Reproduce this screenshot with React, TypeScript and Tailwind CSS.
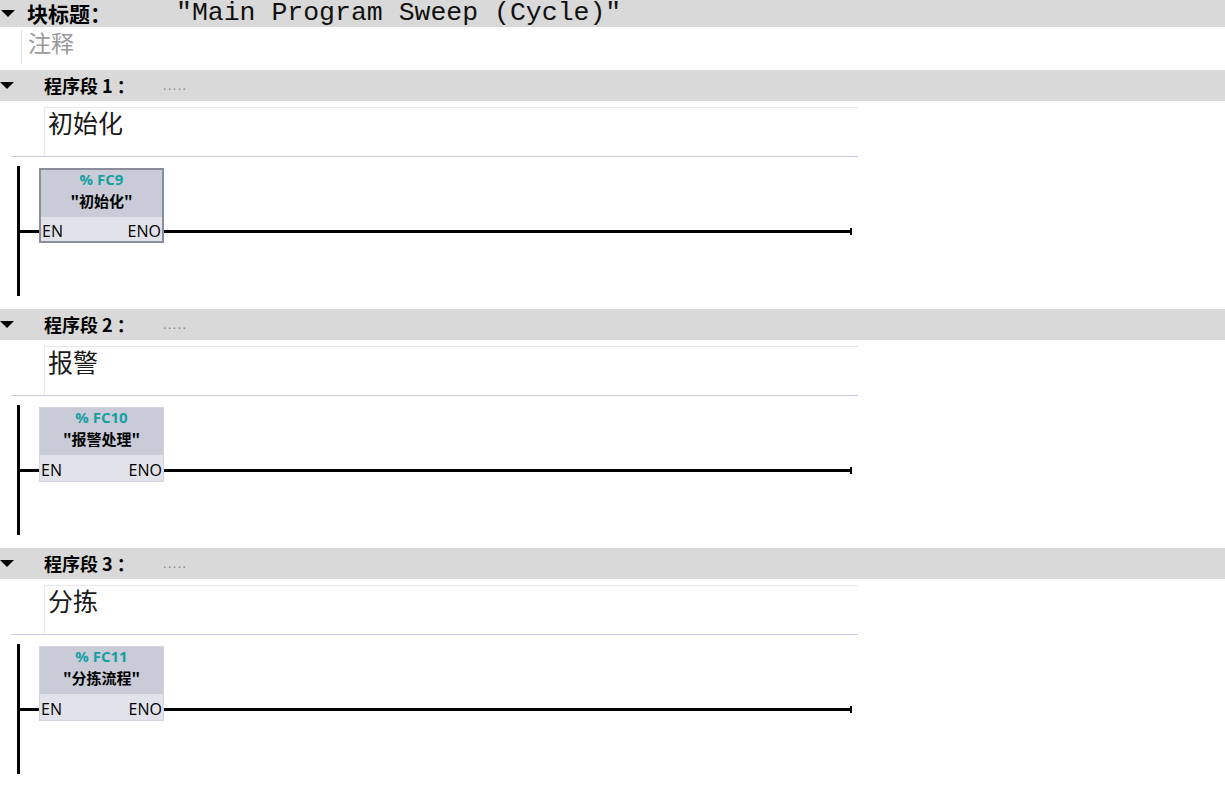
import React from 'react'

const cjk = "font-['Noto_Sans_CJK_SC',sans-serif]"

const networks = [
  { no: 1, comment: '初始化', addr: '%FC9', name: '"初始化"', selected: true },
  { no: 2, comment: '报警', addr: '%FC10', name: '"报警处理"', selected: false },
  { no: 3, comment: '分拣', addr: '%FC11', name: '"分拣流程"', selected: false },
]

const Caret = () => (
  <svg width="14" height="8" viewBox="0 0 14 8" className="shrink-0">
    <path d="M0 0 L14 0 L7 7 Z" fill="#000" />
  </svg>
)

const Block = ({ addr, name, selected }: { addr: string; name: string; selected: boolean }) => (
  <div
    className={`mt-[2px] flex h-[75px] w-[125px] shrink-0 flex-col ${
      selected ? 'border-2 border-[#8a8e9c]' : 'border border-[#d3d4de]'
    }`}
  >
    <div className="flex h-[47px] flex-col items-center bg-[#c9cbd8]">
      <span className="font-['Open_Sans',sans-serif] text-[15px] leading-[18px] font-bold text-[#15a0a0]">
        {addr.replace('%', '% ')}
      </span>
      <span className={`${cjk} text-[15px] leading-[26px] font-bold text-black`}>{name}</span>
    </div>
    <div className="flex flex-1 items-center justify-between bg-[#e1e2ea] pt-[3px] pr-[1px] pl-[1px] font-['Open_Sans',sans-serif] text-[16px] leading-none text-black">
      <span>EN</span>
      <span>ENO</span>
    </div>
  </div>
)

const Network = ({ n }: { n: (typeof networks)[number] }) => (
  <div className="flex flex-col">
    <div className="flex h-[31px] items-center bg-[#d9d9d9]">
      <Caret />
      <span className={`${cjk} ml-[30px] text-[18px] leading-[31px] font-bold text-black`}>
        程序段 {n.no} ：
      </span>
      <span className="ml-[28px] font-['Liberation_Sans',sans-serif] text-[14px] tracking-[1px] text-[#8a8a8a]">
        .....
      </span>
    </div>
    <div className="mt-[6px] ml-[44px] flex h-[49px] w-[814px] items-start border-t border-l border-[#e8e8e8] pl-[3px]">
      <span className={`${cjk} text-[25px] leading-[28px] text-[#1a1a1a]`}>{n.comment}</span>
    </div>
    <div className="ml-[11px] h-px w-[847px] bg-[#cac9e6]" />
    <div className="mt-[9px] flex h-[130px] pl-[17px]">
      <div className="h-full w-[3px] bg-black" />
      <div className="mt-[64px] h-[3px] w-[19px] bg-black" />
      <Block addr={n.addr} name={n.name} selected={n.selected} />
      <div className="mt-[64px] h-[3px] w-[686px] bg-black" />
      <div className="mt-[62px] h-[7px] w-[2px] bg-black" />
    </div>
    <div className="h-[13px]" />
  </div>
)

export default function App() {
  return (
    <div className="flex min-h-screen w-full flex-col bg-white">
      <div className="flex h-[27px] items-center bg-[#d9d9d9]">
        <div className="ml-[1px]">
          <Caret />
        </div>
        <span className={`${cjk} ml-[12px] text-[21px] leading-[27px] font-bold text-black`}>块标题：</span>
        <span className="ml-[65px] font-['Liberation_Mono',monospace] text-[26.5px] leading-[27px] text-[#111]">
          "Main Program Sweep (Cycle)"
        </span>
      </div>
      <div className="flex h-[43px] items-start">
        <div className="mt-[3px] ml-[21px] h-[34px] w-px bg-[#e4e4e4]" />
        <span className={`${cjk} ml-[6px] text-[23px] leading-[30px] text-[#9a9a9a]`}>注释</span>
      </div>
      {networks.map((n) => (
        <Network key={n.no} n={n} />
      ))}
    </div>
  )
}
